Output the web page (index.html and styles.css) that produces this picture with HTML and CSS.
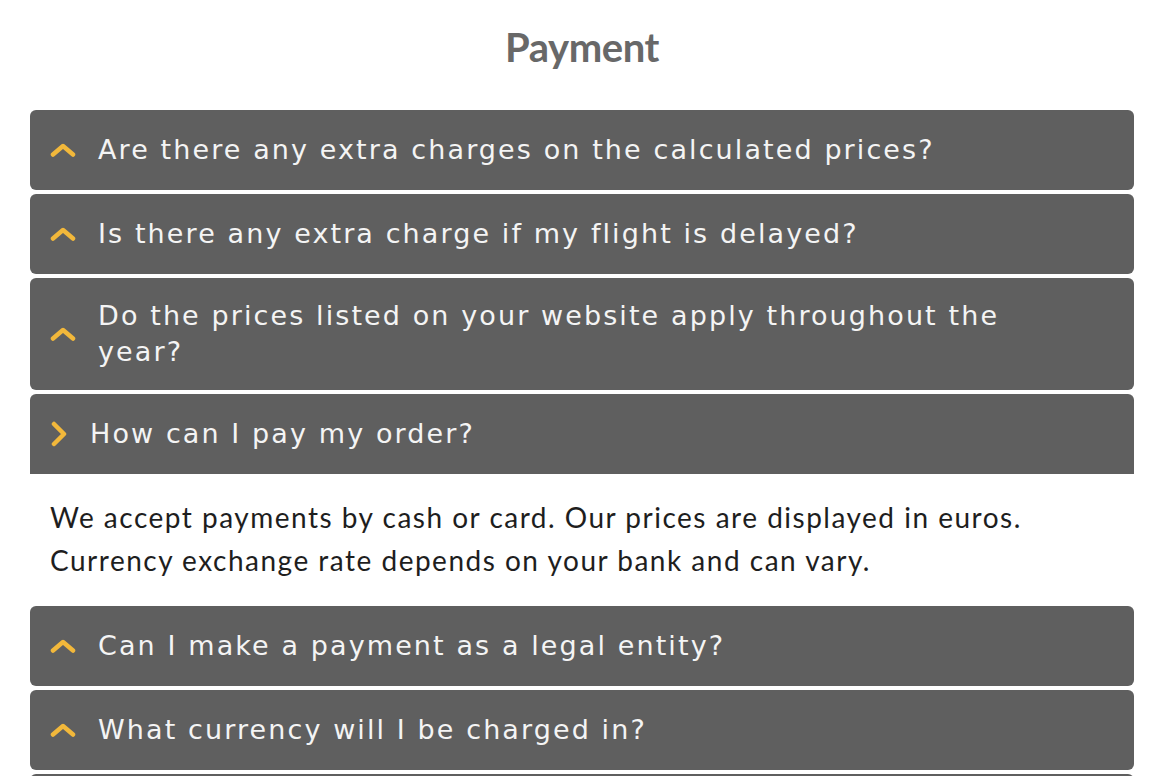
FILE: index.html
```html
<!DOCTYPE html>
<html lang="en">
<head>
<meta charset="utf-8">
<title>Payment FAQ</title>
<link rel="stylesheet" href="styles.css">
</head>
<body>
<main class="faq">
  <h1 class="faq-title">Payment</h1>
  <div class="faq-list">
    <div class="faq-item">
      <div class="faq-q">
        <svg class="chev chev-up" viewBox="0 0 26 14" width="26" height="14"><polyline points="3,11.5 13,3 23,11.5"/></svg>
        <span class="faq-q-text">Are there any extra charges on the calculated prices?</span>
      </div>
    </div>
    <div class="faq-item">
      <div class="faq-q">
        <svg class="chev chev-up" viewBox="0 0 26 14" width="26" height="14"><polyline points="3,11.5 13,3 23,11.5"/></svg>
        <span class="faq-q-text">Is there any extra charge if my flight is delayed?</span>
      </div>
    </div>
    <div class="faq-item">
      <div class="faq-q">
        <svg class="chev chev-up" viewBox="0 0 26 14" width="26" height="14"><polyline points="3,11.5 13,3 23,11.5"/></svg>
        <span class="faq-q-text">Do the prices listed on your website apply throughout the year?</span>
      </div>
    </div>
    <div class="faq-item open">
      <div class="faq-q">
        <svg class="chev chev-right" viewBox="0 0 18 26" width="18" height="26"><polyline points="4,3 14,13 4,23"/></svg>
        <span class="faq-q-text">How can I pay my order?</span>
      </div>
      <div class="faq-a">
        <p>We accept payments by cash or card. Our prices are displayed in euros.<br>Currency exchange rate depends on your bank and can vary.</p>
      </div>
    </div>
    <div class="faq-item">
      <div class="faq-q">
        <svg class="chev chev-up" viewBox="0 0 26 14" width="26" height="14"><polyline points="3,11.5 13,3 23,11.5"/></svg>
        <span class="faq-q-text">Can I make a payment as a legal entity?</span>
      </div>
    </div>
    <div class="faq-item">
      <div class="faq-q">
        <svg class="chev chev-up" viewBox="0 0 26 14" width="26" height="14"><polyline points="3,11.5 13,3 23,11.5"/></svg>
        <span class="faq-q-text">What currency will I be charged in?</span>
      </div>
    </div>
    <div class="faq-item">
      <div class="faq-q"></div>
    </div>
  </div>
</main>
</body>
</html>
```
FILE: styles.css
```css
* { box-sizing: border-box; }

html, body {
  margin: 0;
  padding: 0;
  background: #ffffff;
}

body {
  font-family: "Lato", "Open Sans", sans-serif;
  overflow: hidden;
  height: 776px;
}

.faq {
  padding: 0 42px 0 30px;
}

.faq-title {
  margin: 0;
  padding-top: 22px;
  padding-bottom: 38px;
  text-align: center;
  font-family: "Lato", sans-serif;
  font-weight: 700;
  font-size: 40px;
  line-height: 50px;
  letter-spacing: -0.4px;
  color: #686868;
}

.faq-list {
  display: flex;
  flex-direction: column;
  gap: 4px;
}

.faq-item {
  display: flex;
  flex-direction: column;
}

.faq-q {
  display: flex;
  align-items: center;
  gap: 22px;
  min-height: 80px;
  padding: 20px 60px 20px 20px;
  background: #5f5f5f;
  border-radius: 6px;
}

.faq-item.open .faq-q {
  border-radius: 6px 6px 0 0;
}

.faq-q-text {
  font-family: "DejaVu Sans", "Verdana", sans-serif;
  font-size: 27px;
  line-height: 36px;
  letter-spacing: 2.1px;
  color: #f4f4f4;
}

.chev {
  flex: none;
  fill: none;
  stroke: #f2b83b;
  stroke-width: 4.5;
  stroke-linecap: round;
  stroke-linejoin: round;
}

.faq-a {
  padding: 22px 20px 20px 20px;
}

.faq-a p {
  margin: 0;
  font-family: "Lato", sans-serif;
  font-size: 28px;
  line-height: 43px;
  letter-spacing: 1.5px;
  color: #1e1e1e;
}
```
